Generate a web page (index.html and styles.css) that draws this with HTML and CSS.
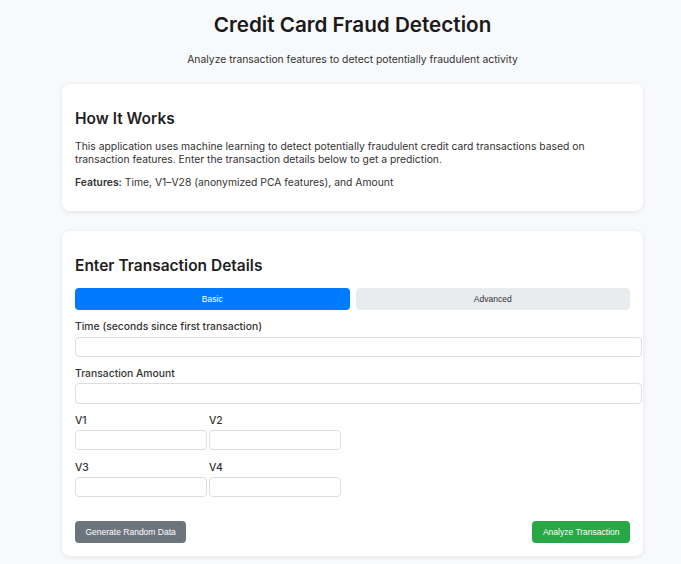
FILE: index.html
```html
<!DOCTYPE html>
<html lang="en">
<head>
<meta charset="utf-8">
<title>Credit Card Fraud Detection</title>
<link rel="stylesheet" href="styles.css">
</head>
<body>
<div class="page">
  <header class="header">
    <h1 class="title">Credit Card Fraud Detection</h1>
    <p class="subtitle">Analyze transaction features to detect potentially fraudulent activity</p>
  </header>

  <section class="card">
    <h2 class="card-title">How It Works</h2>
    <p class="text">This application uses machine learning to detect potentially fraudulent credit card transactions based on transaction features. Enter the transaction details below to get a prediction.</p>
    <p class="text"><strong>Features:</strong> Time, V1–V28 (anonymized PCA features), and Amount</p>
  </section>

  <section class="card">
    <h2 class="card-title">Enter Transaction Details</h2>
    <div class="tabs">
      <button class="tab tab-active" type="button">Basic</button>
      <button class="tab" type="button">Advanced</button>
    </div>
    <div class="form-group">
      <label class="label">Time (seconds since first transaction)</label>
      <input class="input input-wide" type="text">
    </div>
    <div class="form-group">
      <label class="label">Transaction Amount</label>
      <input class="input input-wide" type="text">
    </div>
    <div class="grid">
      <div class="form-group">
        <label class="label">V1</label>
        <input class="input input-cell" type="text">
      </div>
      <div class="form-group">
        <label class="label">V2</label>
        <input class="input input-cell" type="text">
      </div>
      <div class="form-group">
        <label class="label">V3</label>
        <input class="input input-cell" type="text">
      </div>
      <div class="form-group">
        <label class="label">V4</label>
        <input class="input input-cell" type="text">
      </div>
    </div>
    <div class="actions">
      <button class="btn btn-grey" type="button">Generate Random Data</button>
      <button class="btn btn-green" type="button">Analyze Transaction</button>
    </div>
  </section>
</div>
</body>
</html>
```

FILE: styles.css
```css
html, body {
  margin: 0;
  padding: 0;
}
body {
  background: #f8f9fa;
  font-family: Inter, "Noto Sans", sans-serif;
  color: #333;
  font-size: 10.35px;
}
.page {
  width: 581px;
  margin-left: 62px;
  padding-top: 13px;
}
.header {
  text-align: center;
}
.title {
  margin: 0;
  font-size: 20.67px;
  line-height: 24px;
  font-weight: 600;
  color: #1a1a1a;
}
.subtitle {
  margin: 16px 0 18px;
  font-size: 10.35px;
  line-height: 13px;
  color: #333;
}
.card {
  background: #fff;
  border-radius: 8px;
  box-shadow: 0 1px 5px rgba(0, 0, 0, 0.09);
  padding: 13px 13px 13px;
  margin-bottom: 20px;
}
.card-title {
  margin: 12px 0 12px;
  font-size: 15.5px;
  line-height: 19px;
  font-weight: 600;
  color: #1f1f1f;
}
.text {
  margin: 0 0 9px;
  line-height: 13.3px;
}
.text strong {
  font-weight: 600;
}
.tabs {
  display: flex;
  gap: 6px;
  margin-top: 13px;
  margin-bottom: 10.4px;
}
.tab {
  flex: 1;
  height: 22px;
  border: none;
  border-radius: 4px;
  background: #e9ecef;
  color: #333;
  font-family: "Liberation Sans", Arial, sans-serif;
  font-size: 8.5px;
  padding: 0;
}
.tab-active {
  background: #007bff;
  color: #fff;
}
.form-group {
  margin-bottom: 10.2px;
}
.label {
  display: block;
  font-weight: 500;
  line-height: 13px;
  margin-bottom: 3.3px;
  color: #333;
}
.input {
  display: block;
  border: 1px solid #ddd;
  border-radius: 4px;
  background: #fff;
  margin: 0;
  font: inherit;
}
.input-wide {
  box-sizing: content-box;
  width: 100%;
  height: 18.3px;
  padding: 0 5px;
}
.input-cell {
  box-sizing: border-box;
  width: 100%;
  height: 20.3px;
  padding: 0 5px;
}
.grid {
  display: grid;
  grid-template-columns: 132px 132px;
  column-gap: 2px;
}
.actions {
  display: flex;
  justify-content: space-between;
  margin-top: 13.8px;
}
.btn {
  height: 21.6px;
  border: none;
  border-radius: 4px;
  padding: 0 10.5px;
  color: #fff;
  font-family: "Liberation Sans", Arial, sans-serif;
  font-size: 8.5px;
}
.btn-grey {
  background: #6c757d;
}
.btn-green {
  background: #28a745;
}
```
